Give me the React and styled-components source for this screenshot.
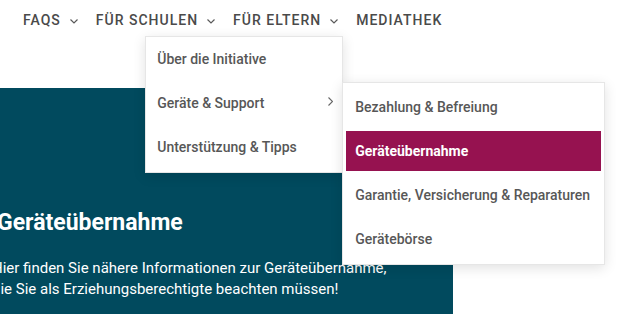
import React from 'react';
import styled, { createGlobalStyle } from 'styled-components';

const GlobalStyle = createGlobalStyle`
  html, body {
    margin: 0;
    padding: 0;
    background: #ffffff;
    font-family: Roboto, "Liberation Sans", sans-serif;
    overflow: hidden;
  }
`;

const Page = styled.div`
  width: 629px;
  height: 314px;
  position: relative;
  overflow: hidden;
`;

const Header = styled.nav`
  height: 40px;
  display: flex;
  align-items: center;
  padding-left: 23px;
  gap: 18px;
  position: relative;
  z-index: 5;
`;

const NavItem = styled.div`
  position: relative;
  display: flex;
  align-items: center;
  gap: 9px;
  height: 40px;
  font-size: 14px;
  font-weight: 500;
  letter-spacing: 1px;
  text-transform: uppercase;
  color: #4a4a4a;
  cursor: pointer;
`;

const Chevron = styled.svg`
  width: 8px;
  height: 5px;
  margin-top: 2px;
  fill: none;
  stroke: #5a5a5a;
  stroke-width: 1.2;
`;

const Dropdown = styled.div`
  position: absolute;
  top: 36px;
  right: -5px;
  width: 198px;
  display: flex;
  flex-direction: column;
  gap: 4px;
  padding: 2px 0 5px;
  background: #fff;
  border: 1px solid #e6e6e6;
  box-sizing: border-box;
  box-shadow: 0 3px 12px rgba(0, 0, 0, 0.12);
  letter-spacing: 0;
  text-transform: none;
`;

const SubMenu = styled(Dropdown)`
  top: -1px;
  left: 100%;
  right: auto;
  width: 263px;
  padding: 4px 0 5px;
  margin-left: 3px;
`;

const MenuItem = styled.div`
  position: relative;
  display: flex;
  align-items: center;
  justify-content: space-between;
  height: 40px;
  margin: 0 3px;
  padding: 0 ${({ inset }) => inset || 8}px;
  font-size: 14px;
  font-weight: ${({ active }) => (active ? 700 : 500)};
  color: ${({ active }) => (active ? '#ffffff' : '#575757')};
  background: ${({ active }) => (active ? '#961250' : 'transparent')};
  white-space: nowrap;
`;

const Arrow = styled.svg`
  width: 5px;
  height: 9px;
  margin-right: -2px;
  margin-top: -3px;
  fill: none;
  stroke: #666;
  stroke-width: 1.1;
`;

const Hero = styled.section`
  margin-top: 48px;
  width: 453px;
  height: 226px;
  background: #014a5e;
  color: #ffffff;
  display: flex;
  flex-direction: column;
  padding-top: 120px;
  box-sizing: border-box;
`;

const Title = styled.h1`
  margin: 0 0 20px -3px;
  font-size: 23px;
  font-weight: 700;
  line-height: 30px;
`;

const Lead = styled.p`
  margin: 0 0 0 -8px;
  font-size: 15px;
  line-height: 21px;
  font-weight: 400;
`;

const Down = () => (
  <Chevron viewBox="0 0 8 5">
    <polyline points="0.5,0.5 4,4 7.5,0.5" />
  </Chevron>
);

const App = () => (
  <Page>
    <GlobalStyle />
    <Header>
      <NavItem>FAQs <Down /></NavItem>
      <NavItem>Für Schulen <Down /></NavItem>
      <NavItem>
        Für Eltern <Down />
        <Dropdown>
          <MenuItem>Über die Initiative</MenuItem>
          <MenuItem>
            Geräte &amp; Support
            <Arrow viewBox="0 0 5 9">
              <polyline points="0.5,0.5 4.5,4.5 0.5,8.5" />
            </Arrow>
            <SubMenu>
              <MenuItem inset={9}>Bezahlung &amp; Befreiung</MenuItem>
              <MenuItem inset={9} active>Geräteübernahme</MenuItem>
              <MenuItem inset={9}>Garantie, Versicherung &amp; Reparaturen</MenuItem>
              <MenuItem inset={9}>Gerätebörse</MenuItem>
            </SubMenu>
          </MenuItem>
          <MenuItem>Unterstützung &amp; Tipps</MenuItem>
        </Dropdown>
      </NavItem>
      <NavItem>Mediathek</NavItem>
    </Header>
    <Hero>
      <Title>Geräteübernahme</Title>
      <Lead>
        Hier finden Sie nähere Informationen zur Geräteübernahme,
        <br />
        die Sie als Erziehungsberechtigte beachten müssen!
      </Lead>
    </Hero>
  </Page>
);

export default App;
